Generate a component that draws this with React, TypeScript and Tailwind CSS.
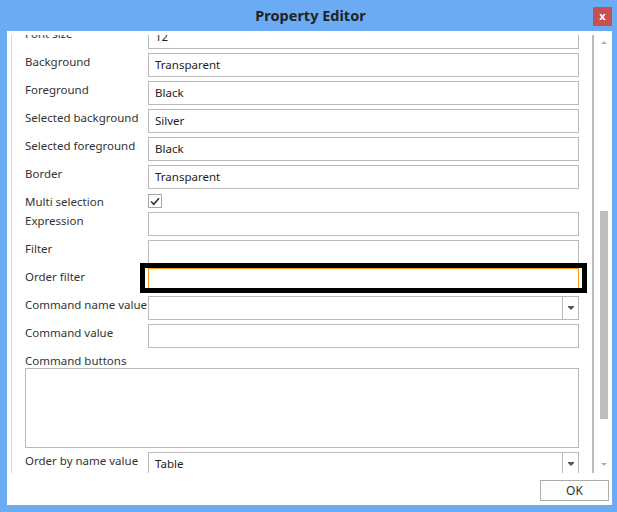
import React from 'react';

const font = { fontFamily: '"Segoe UI", "Noto Sans", sans-serif' };

function Field({ value, focused }: { value?: string; focused?: boolean }) {
  return (
    <div
      className={`h-[24px] border bg-white pl-[6px] flex items-center text-[11.5px] text-[#222] ${
        focused ? 'border-[#f39a1e]' : 'border-[#bababa]'
      }`}
    >
      {value}
    </div>
  );
}

function Combo({ value }: { value?: string }) {
  return (
    <div className="h-[24px] border border-[#bababa] bg-white flex text-[11.5px] text-[#222]">
      <div className="flex-1 pl-[6px] flex items-center">{value}</div>
      <div className="w-[16px] border-l border-[#bababa] flex items-center justify-center">
        <div className="flex flex-col items-center">
          <div className="w-[6px] h-px bg-[#555]" />
          <div className="w-0 h-0 border-l-[3px] border-r-[3px] border-t-[3px] border-l-transparent border-r-transparent border-t-[#555]" />
        </div>
      </div>
    </div>
  );
}

function Row({ label, short, children }: { label: string; short?: boolean; children: React.ReactNode }) {
  return (
    <div className={`grid grid-cols-[123px_1fr] ${short ? 'h-[15px]' : ''}`}>
      <div className="text-[11.5px] leading-[16px] text-[#333] pt-[1px] whitespace-nowrap">{label}</div>
      <div className="relative">{children}</div>
    </div>
  );
}

export default function App() {
  return (
    <div className="w-[617px] h-[512px] bg-[#6aabf3] flex flex-col" style={font}>
      {/* title bar */}
      <div className="h-[31px] grid grid-cols-[1fr_auto_1fr]">
        <div />
        <div className="pt-[5px] pl-[4px] text-[14.5px] leading-[20px] font-bold text-[#222]">Property Editor</div>
        <div className="flex justify-end pr-[5px] pt-[7px]">
          <div className="w-[19px] h-[19px] bg-[#c75050] text-white text-[11px] font-bold leading-[17px] text-center">
            x
          </div>
        </div>
      </div>

      {/* body */}
      <div className="ml-[7px] mr-[5px] h-[474px] bg-white flex flex-col">
        <div className="mt-[4px] ml-[4px] h-[438px] flex">
          <div className="flex-1 border-l border-[#d9d9d9] overflow-hidden">
            <div className="-mt-[10px] pl-[13px] pr-[13px] flex flex-col gap-[4px]">
              <Row label="Font size"><Field value="12" /></Row>
              <Row label="Background"><Field value="Transparent" /></Row>
              <Row label="Foreground"><Field value="Black" /></Row>
              <Row label="Selected background"><Field value="Silver" /></Row>
              <Row label="Selected foreground"><Field value="Black" /></Row>
              <Row label="Border"><Field value="Transparent" /></Row>
              <Row label="Multi selection" short>
                <div className="h-[15px] pt-[1px]">
                  <div className="w-[14px] h-[14px] border border-[#a8a8a8] bg-white flex items-center justify-center">
                    <svg width="10" height="9" viewBox="0 0 10 9">
                      <path d="M1 4.5 L3.8 7.3 L9 1.2" fill="none" stroke="#333" strokeWidth="1.6" />
                    </svg>
                  </div>
                </div>
              </Row>
              <Row label="Expression"><Field /></Row>
              <Row label="Filter"><Field /></Row>
              <Row label="Order filter">
                <Field focused />
                <div className="absolute -left-[8px] -right-[8px] -top-[5px] h-[30px] border-[5px] border-black" />
              </Row>
              <Row label="Command name value"><Combo /></Row>
              <Row label="Command value"><Field /></Row>
              <div className="flex flex-col">
                <div className="text-[11.5px] leading-[16px] text-[#333] pt-[1px] h-[16px] whitespace-nowrap">Command buttons</div>
                <div className="h-[80px] border border-[#bababa]" />
              </div>
              <Row label="Order by name value"><Combo value="Table" /></Row>
            </div>
          </div>

          {/* scrollbar */}
          <div className="w-[20px] border-l-2 border-[#bcbcbc] flex flex-col items-center pt-[6px] pl-[1px]">
            <div className="w-0 h-0 border-l-[3px] border-r-[3px] border-b-[3px] border-l-transparent border-r-transparent border-b-[#b0b0b0]" />
            <div className="w-[8px] h-[208px] bg-[#bdbdbd] mt-[167px]" />
            <div className="w-0 h-0 border-l-[3px] border-r-[3px] border-t-[3px] border-l-transparent border-r-transparent border-t-[#b0b0b0] mt-[44px]" />
          </div>
        </div>

        {/* footer */}
        <div className="flex justify-end pr-[3px] pt-[7px]">
          <button className="w-[69px] h-[21px] border border-[#acacac] bg-[#fdfdfd] text-[12px] text-[#333] leading-[19px]">
            OK
          </button>
        </div>
      </div>
    </div>
  );
}
